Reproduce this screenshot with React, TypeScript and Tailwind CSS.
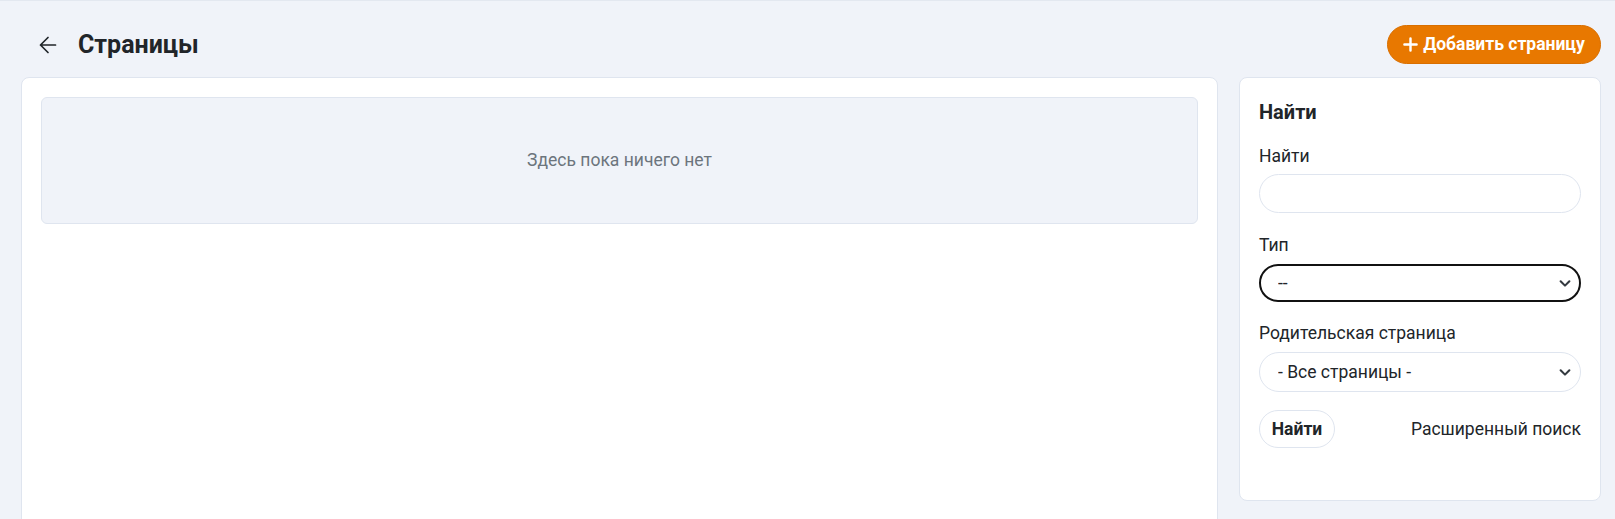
import React from "react";

const Chevron = () => (
  <svg
    className="pointer-events-none absolute right-[9px] top-1/2 -translate-y-1/2"
    width="14"
    height="14"
    viewBox="0 0 16 16"
    fill="none"
  >
    <path d="M3 6l5 5 5-5" stroke="#343a40" strokeWidth="2.4" strokeLinecap="round" strokeLinejoin="round" />
  </svg>
);

export default function App() {
  return (
    <div
      className="min-h-screen overflow-hidden border-t border-[#e3e8f0] bg-[#f0f3f9] pl-[21px] pr-[14px] text-[#212529]"
      style={{ fontFamily: "Roboto, 'Liberation Sans', sans-serif" }}
    >
      <div className="mt-[24px] flex h-[39px] items-center justify-between">
        <div className="flex items-center">
          <svg className="ml-[18px]" width="18" height="18" viewBox="0 0 18 18" fill="none">
            <path d="M16.5 9H1.5M9 1.5L1.5 9L9 16.5" stroke="#212529" strokeWidth="1.7" strokeLinecap="round" strokeLinejoin="round" />
          </svg>
          <h1 className="ml-[21px] text-[25px] font-bold leading-none">Страницы</h1>
        </div>
        <button className="flex h-[39px] w-[214px] items-center justify-center gap-[5px] rounded-full border border-[#d96f00] bg-[#e87800] text-[17.5px] font-bold text-white">
          <svg width="15" height="15" viewBox="0 0 16 16" fill="none">
            <path d="M8 1.5v13M1.5 8h13" stroke="white" strokeWidth="2.6" strokeLinecap="round" />
          </svg>
          Добавить страницу
        </button>
      </div>

      <div className="mt-[13px] flex items-start gap-[21px]">
        <div className="h-[470px] flex-1 rounded-lg border border-[#dfe5ef] bg-white p-[19px]">
          <div className="flex h-[127px] items-center justify-center rounded-md border border-[#dfe5ef] bg-[#f0f3f9] text-[17.5px] text-[#6c757d]">
            Здесь пока ничего нет
          </div>
        </div>

        <div className="w-[362px] shrink-0 rounded-lg border border-[#dfe5ef] bg-white px-[19px] pb-[52px] pt-[21px]">
          <h2 className="text-[20px] font-bold leading-[27px]">Найти</h2>

          <label className="mt-[18px] block text-[17.5px] leading-[24px]">Найти</label>
          <input className="mt-[6px] block h-[39px] w-full rounded-full border border-[#dfe5ef] bg-white px-[18px] text-[17.5px] outline-none" />

          <label className="mt-[20px] block text-[17.5px] leading-[24px]">Тип</label>
          <div className="relative mt-[7px]">
            <select className="block h-[38px] w-full appearance-none rounded-full border-2 border-[#111] bg-white pl-[17px] text-[17.5px] text-[#212529] outline-none">
              <option>--</option>
            </select>
            <Chevron />
          </div>

          <label className="mt-[19px] block text-[17.5px] leading-[24px]">Родительская страница</label>
          <div className="relative mt-[7px]">
            <select className="block h-[40px] w-full appearance-none rounded-full border border-[#dfe5ef] bg-white pl-[18px] text-[17.5px] text-[#212529] outline-none">
              <option>- Все страницы -</option>
            </select>
            <Chevron />
          </div>

          <div className="mt-[18px] flex items-center justify-between">
            <button className="h-[38px] w-[76px] rounded-full border border-[#dfe5ef] bg-white text-[17.5px] font-bold">
              Найти
            </button>
            <span className="text-[17.5px]">Расширенный поиск</span>
          </div>
        </div>
      </div>
    </div>
  );
}
